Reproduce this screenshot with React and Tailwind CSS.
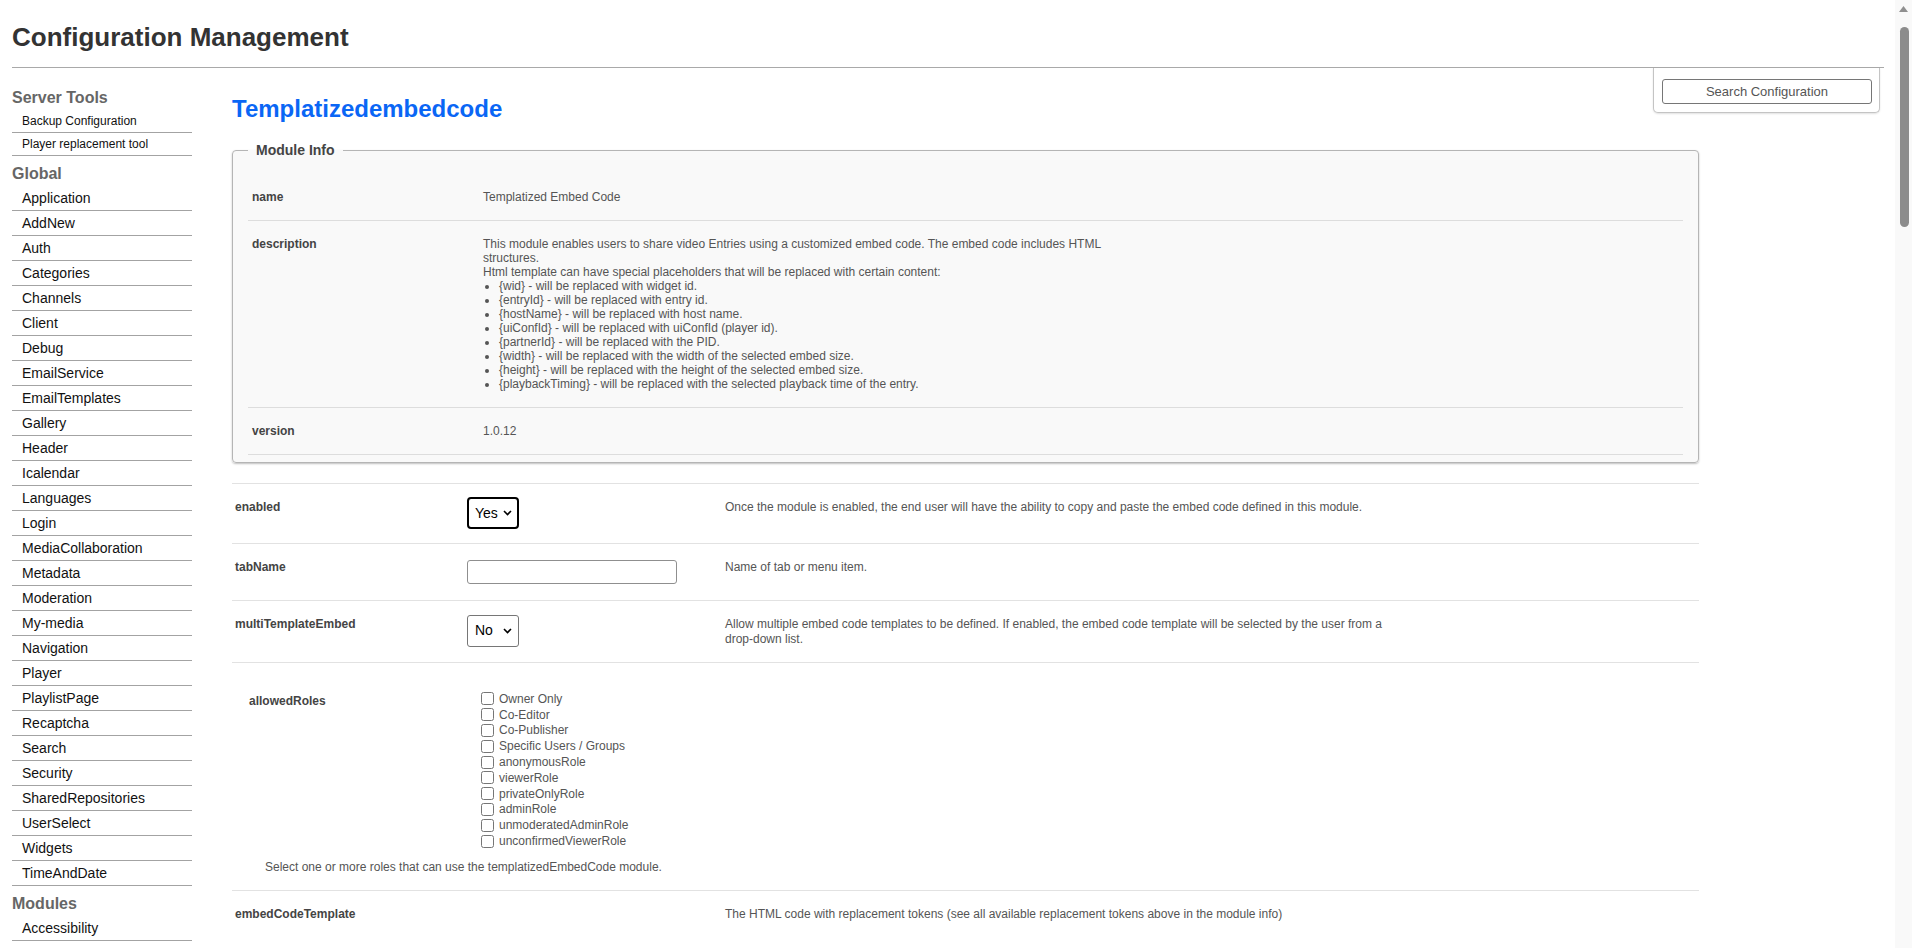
const serverTools = ['Backup Configuration', 'Player replacement tool'];

const globalItems = [
  'Application', 'AddNew', 'Auth', 'Categories', 'Channels', 'Client', 'Debug',
  'EmailService', 'EmailTemplates', 'Gallery', 'Header', 'Icalendar', 'Languages',
  'Login', 'MediaCollaboration', 'Metadata', 'Moderation', 'My-media', 'Navigation',
  'Player', 'PlaylistPage', 'Recaptcha', 'Search', 'Security', 'SharedRepositories',
  'UserSelect', 'Widgets', 'TimeAndDate'
];

const moduleItems = ['Accessibility'];

const placeholders = [
  ['{wid}', 'will be replaced with widget id.'],
  ['{entryId}', 'will be replaced with entry id.'],
  ['{hostName}', 'will be replaced with host name.'],
  ['{uiConfId}', 'will be replaced with uiConfId (player id).'],
  ['{partnerId}', 'will be replaced with the PID.'],
  ['{width}', 'will be replaced with the width of the selected embed size.'],
  ['{height}', 'will be replaced with the height of the selected embed size.'],
  ['{playbackTiming}', 'will be replaced with the selected playback time of the entry.']
];

const roles = [
  'Owner Only', 'Co-Editor', 'Co-Publisher', 'Specific Users / Groups', 'anonymousRole',
  'viewerRole', 'privateOnlyRole', 'adminRole', 'unmoderatedAdminRole', 'unconfirmedViewerRole'
];

const SideHeading = ({ children }) => (
  <div className="pt-2 pb-[3px] text-[16px] leading-[19px] font-bold text-[#666]">{children}</div>
);

const YesNo = ({ value, focused }) => (
  <div className="relative w-[52px] h-[32px]">
    <select
      defaultValue={value}
      className={
        focused
          ? 'appearance-none w-full h-full bg-white pl-[6px] text-[14px] text-black rounded-[4px] border-2 border-black outline-none'
          : 'appearance-none w-full h-full bg-white pl-[7px] text-[14px] text-black rounded-[3px] border border-[#767676] outline-none'
      }
    >
      <option>Yes</option>
      <option>No</option>
    </select>
    <svg className="pointer-events-none absolute right-[7px] top-[13px]" width="9" height="6" viewBox="0 0 9 6">
      <path d="M1 1l3.5 3.5L8 1" fill="none" stroke="#000" strokeWidth="1.6" />
    </svg>
  </div>
);

const InfoRow = ({ label, children }) => (
  <div className="grid grid-cols-[235px_1fr] border-b border-[#dddddd] py-4 text-[12px] leading-[14px]">
    <div className="pl-[4px] font-bold text-[#444]">{label}</div>
    <div className="text-[#555]">{children}</div>
  </div>
);

const SettingRow = ({ label, control, desc, extra = 'py-[13px]' }) => (
  <div className={`flex border-t border-[#e2e2e2] text-[12px] ${extra}`}>
    <div className="w-[235px] shrink-0 self-start pl-[3px] pt-[3px] leading-[15px] font-bold text-[#444]">{label}</div>
    <div className="w-[258px] shrink-0 flex items-center">{control}</div>
    <div className="w-[672px] self-start pt-[3px] leading-[15px] text-[#555]">{desc}</div>
  </div>
);

export default function App() {
  return (
    <div className="relative min-h-screen bg-white font-['Liberation_Sans',Arial,sans-serif]">
      {/* Header */}
      <header className="ml-3 mr-[28px] pt-[22px] pb-[15px] border-b border-[#a9a9a9]">
        <h1 className="text-[26px] leading-[30px] font-bold text-[#333]">Configuration Management</h1>
      </header>

      {/* Search box */}
      <div className="absolute top-[68px] right-[32px] w-[227px] h-[45px] border border-t-0 border-[#c4c4c4] rounded-b-[5px] bg-white shadow-[0_1px_2px_rgba(0,0,0,0.12)] pl-[8px] pt-[11px]">
        <button className="w-[210px] h-[25px] border border-[#767676] rounded-[3px] bg-white text-[13px] text-[#555]">
          Search Configuration
        </button>
      </div>

      <div className="flex">
        {/* Sidebar */}
        <aside className="ml-3 w-[180px] shrink-0 pt-[12px]">
          <SideHeading>Server Tools</SideHeading>
          {serverTools.map((t) => (
            <div key={t} className="border-b border-[#a3a3a3] pl-[10px] py-1 text-[12px] leading-[14px] text-[#111]">{t}</div>
          ))}
          <SideHeading>Global</SideHeading>
          {globalItems.map((t) => (
            <div key={t} className="border-b border-[#a3a3a3] pl-[10px] py-1 text-[14px] leading-[16px] text-[#111]">{t}</div>
          ))}
          <SideHeading>Modules</SideHeading>
          {moduleItems.map((t) => (
            <div key={t} className="border-b border-[#a3a3a3] pl-[10px] py-1 text-[14px] leading-[16px] text-[#111]">{t}</div>
          ))}
        </aside>

        {/* Main */}
        <main className="ml-[40px] w-[1467px] shrink-0 pt-[26px] pb-10">
          <h2 className="text-[24px] leading-[29px] font-bold text-[#0a66f5]">Templatizedembedcode</h2>

          <fieldset className="mt-[19px] border border-[#b5b5b5] rounded-[4px] bg-[#f9f9f9] px-[15px] pt-[15px] pb-[7px] shadow-[0_1px_2px_rgba(0,0,0,0.25)]">
            <legend className="px-2 text-[14px] leading-[17px] font-bold text-[#444]">Module Info</legend>
            <InfoRow label="name">Templatized Embed Code</InfoRow>
            <InfoRow label="description">
              <div className="w-[640px]">
                This module enables users to share video Entries using a customized embed code. The embed code includes HTML structures.
                <br />
                Html template can have special placeholders that will be replaced with certain content:
                <ul className="list-disc pl-4">
                  {placeholders.map(([k, v]) => (
                    <li key={k}>{k} - {v}</li>
                  ))}
                </ul>
              </div>
            </InfoRow>
            <InfoRow label="version">1.0.12</InfoRow>
          </fieldset>

          <div className="mt-[20px]">
            <SettingRow
              label="enabled"
              extra="pt-[13px] pb-[14px]"
              control={<YesNo value="Yes" focused />}
              desc="Once the module is enabled, the end user will have the ability to copy and paste the embed code defined in this module."
            />
            <SettingRow
              label="tabName"
              control={<input type="text" className="my-[3px] w-[210px] h-[24px] border border-[#8f8f8f] rounded-[3px] bg-white px-1 text-[13px] outline-none" />}
              desc="Name of tab or menu item."
            />
            <SettingRow
              label="multiTemplateEmbed"
              extra="pt-[13px] pb-[15px]"
              control={<YesNo value="No" />}
              desc="Allow multiple embed code templates to be defined. If enabled, the embed code template will be selected by the user from a drop-down list."
            />

            {/* allowedRoles */}
            <div className="border-t border-[#e2e2e2] pt-[28px] pb-[16px] text-[12px]">
              <div className="flex pl-[17px]">
                <div className="w-[232px] shrink-0 pt-[3px] leading-[14px] font-bold text-[#444]">allowedRoles</div>
                <div className="flex flex-col">
                  {roles.map((r) => (
                    <label key={r} className="flex h-[15.8px] items-center text-[#555]">
                      <input type="checkbox" className="w-[13px] h-[13px] m-0" />
                      <span className="ml-[5px] leading-[14px]">{r}</span>
                    </label>
                  ))}
                </div>
              </div>
              <div className="mt-[11px] pl-[33px] leading-[14px] text-[#555]">
                Select one or more roles that can use the templatizedEmbedCode module.
              </div>
            </div>

            <SettingRow
              label="embedCodeTemplate"
              control={null}
              desc="The HTML code with replacement tokens (see all available replacement tokens above in the module info)"
            />
            <div className="pt-[20px] pl-[467px]">
              <textarea className="w-[672px] h-[160px] border border-[#8f8f8f] rounded-[3px] p-1 text-[12px]" defaultValue="" />
            </div>
          </div>
        </main>
      </div>

      {/* Browser scrollbar */}
      <div className="fixed right-0 top-0 h-screen w-[17px] bg-[#f9f9f9]">
        <svg className="absolute left-[4px] top-[6px]" width="9" height="6" viewBox="0 0 9 6">
          <path d="M4.5 0L9 6H0z" fill="#8f8f8f" />
        </svg>
        <div className="absolute left-[5px] top-[27px] h-[200px] w-[9px] rounded-full bg-[#8c8c8c]" />
      </div>
    </div>
  );
}
